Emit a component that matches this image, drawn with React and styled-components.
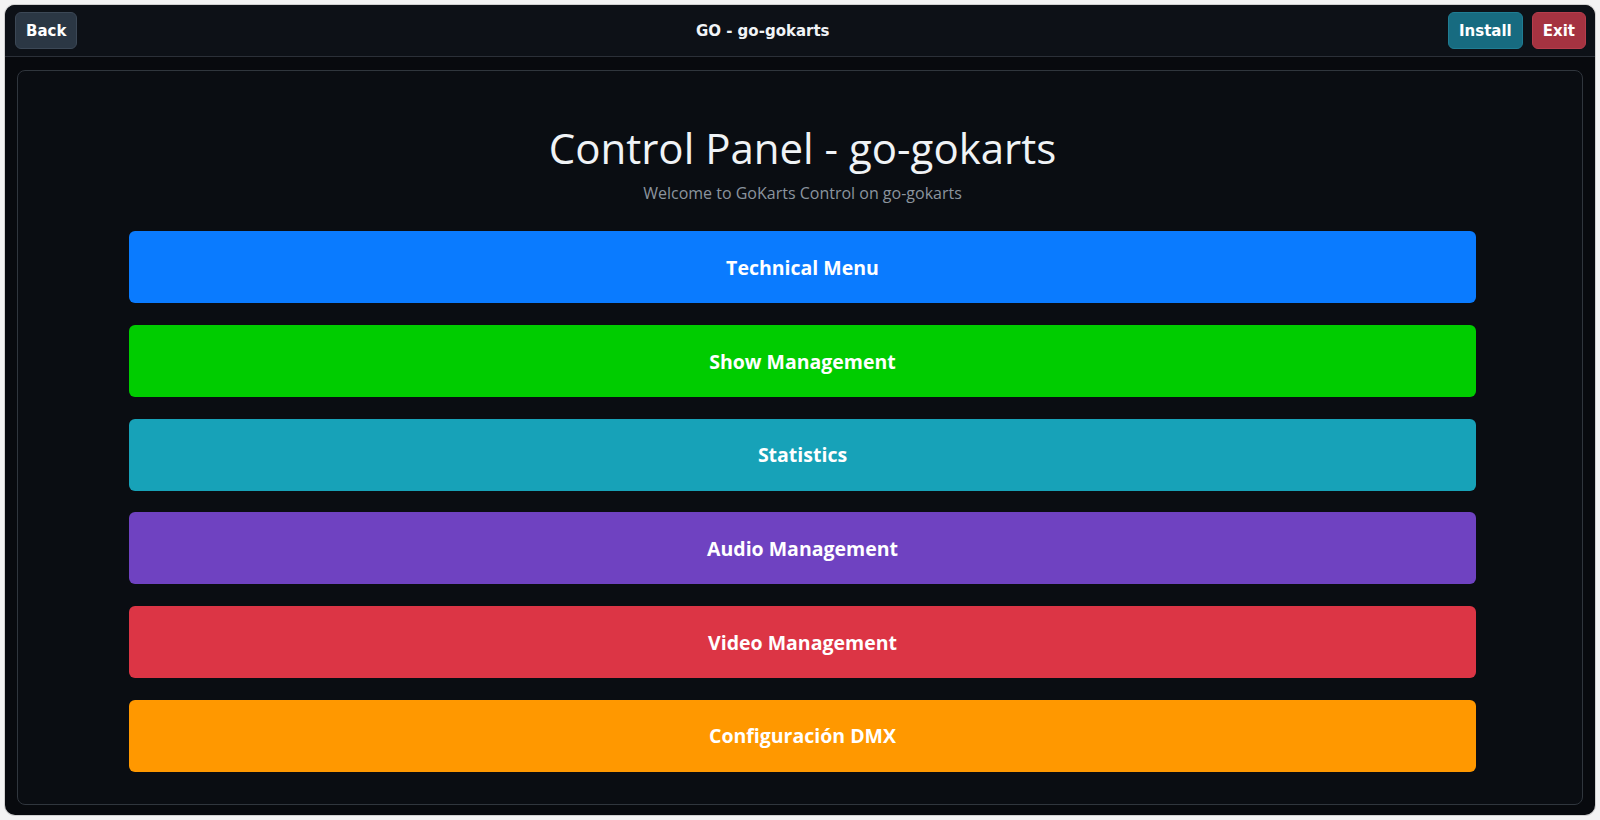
import React from 'react';
import styled, {createGlobalStyle} from 'styled-components';

const GlobalStyle = createGlobalStyle`
    html, body {
        margin: 0;
        padding: 0;
        background: #f3f3f3;
    }
    * {
        box-sizing: border-box;
    }
`;

const Window = styled.div`
    margin: 5px;
    height: 810px;
    border-radius: 10px;
    overflow: hidden;
    background: #080a0e;
    display: flex;
    flex-direction: column;
    box-shadow: 0 0 0 1px #d0d0d0;
`;

const TopBar = styled.header`
    display: flex;
    align-items: center;
    justify-content: space-between;
    padding: 7px 9px 7px 10px;
    height: 52px;
    background: #0d1117;
    border-bottom: 1px solid #2b3038;
    font-family: "DejaVu Sans", Verdana, sans-serif;
`;

const TopTitle = styled.div`
    color: #f0f3f6;
    font-size: 15px;
    font-weight: 700;
`;

const Actions = styled.div`
    display: flex;
    gap: 9px;
`;

const BarButton = styled.button`
    height: 37px;
    padding: 0 10px;
    border-radius: 6px;
    border: 1px solid ${({border}) => border};
    background: ${({bg}) => bg};
    color: #fff;
    font-family: inherit;
    font-size: 15px;
    font-weight: 700;
    cursor: pointer;
`;

const Main = styled.main`
    flex: 1;
    padding: 13px 12px 10px;
`;

const Panel = styled.section`
    height: 100%;
    border: 1px solid #30363d;
    border-radius: 8px;
    background: #0a0d12;
    padding: 52px 106px 0 111px;
    font-family: "Open Sans", "Segoe UI", sans-serif;
    text-align: center;
`;

const Title = styled.h1`
    margin: 0;
    font-size: 42px;
    font-weight: 400;
    line-height: 1.2;
    color: #f0f3f6;
`;

const Subtitle = styled.p`
    margin: 8px 0 26px;
    font-size: 16px;
    line-height: 1.5;
    color: #8b949e;
`;

const Menu = styled.nav`
    display: flex;
    flex-direction: column;
    gap: 21.7px;
`;

const MenuButton = styled.button`
    height: 72px;
    border: none;
    border-radius: 6px;
    background: ${({color}) => color};
    color: #fff;
    font-family: inherit;
    font-size: 19.5px;
    font-weight: 700;
    cursor: pointer;
`;

const menuItems = [
    {label: 'Technical Menu', color: '#0a7bff'},
    {label: 'Show Management', color: '#00cc00'},
    {label: 'Statistics', color: '#17a2b8'},
    {label: 'Audio Management', color: '#6f42c1'},
    {label: 'Video Management', color: '#dc3545'},
    {label: 'Configuración DMX', color: '#ff9800'},
];

const App = () => (
    <>
        <GlobalStyle/>
        <Window>
            <TopBar>
                <BarButton bg="#2b3744" border="#3c4856">Back</BarButton>
                <TopTitle>GO - go-gokarts</TopTitle>
                <Actions>
                    <BarButton bg="#176b80" border="#1f7d93">Install</BarButton>
                    <BarButton bg="#a53341" border="#b63d4c">Exit</BarButton>
                </Actions>
            </TopBar>
            <Main>
                <Panel>
                    <Title>Control Panel - go-gokarts</Title>
                    <Subtitle>Welcome to GoKarts Control on go-gokarts</Subtitle>
                    <Menu>
                        {menuItems.map(({label, color}) => (
                            <MenuButton key={label} color={color}>{label}</MenuButton>
                        ))}
                    </Menu>
                </Panel>
            </Main>
        </Window>
    </>
);

export default App;
